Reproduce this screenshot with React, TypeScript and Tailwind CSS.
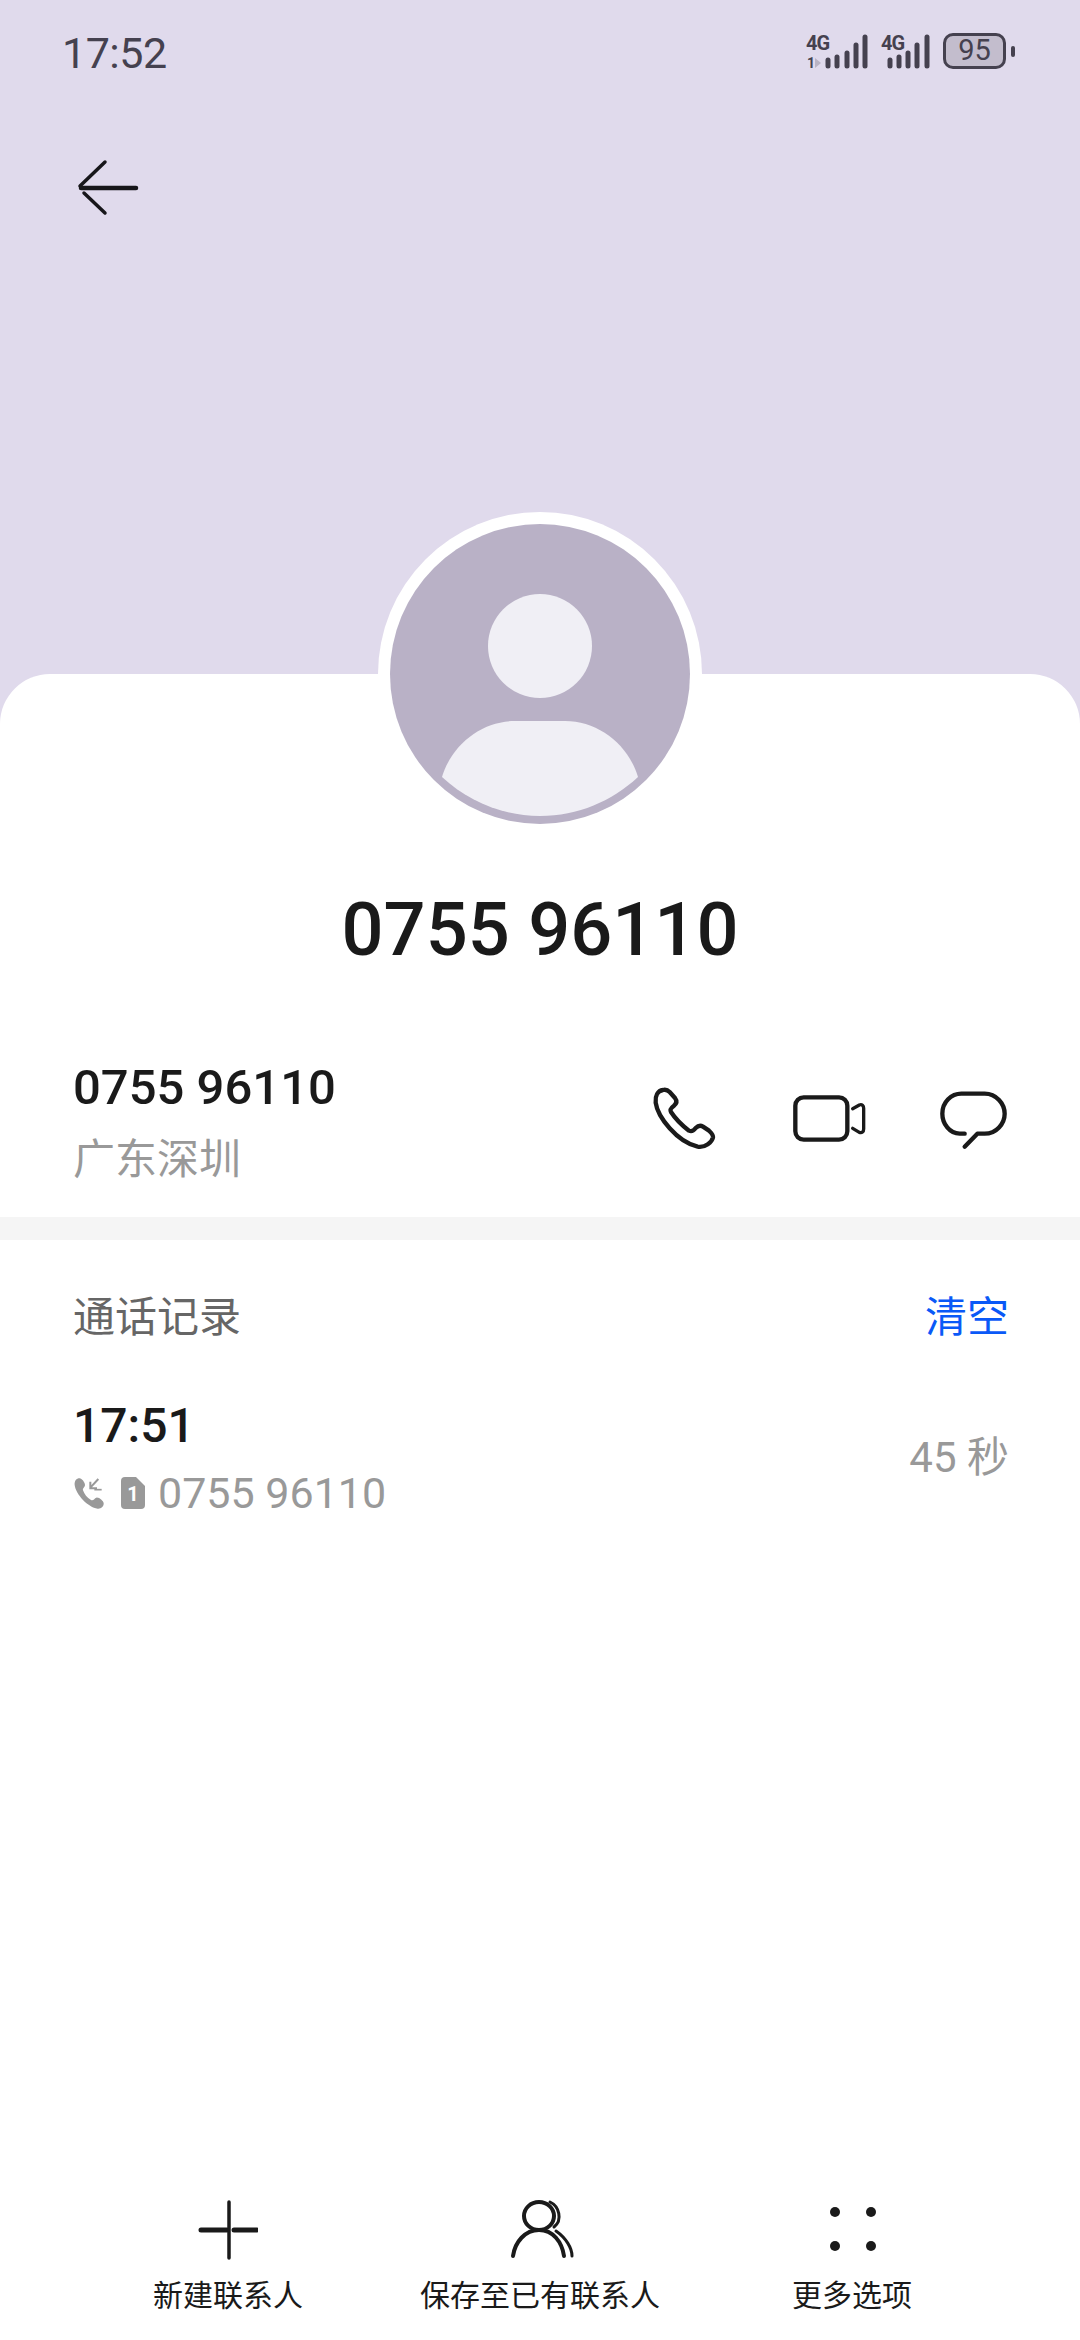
const sans = "font-['Roboto','Noto_Sans_CJK_SC',sans-serif]";

function SignalIcons() {
  const bars = [828, 837, 847, 856, 865, 890, 899, 908, 917, 927];
  const tops = [58, 55, 51, 43, 35, 58, 55, 51, 43, 35];
  return (
    <svg width="130" height="44" viewBox="805 29 130 44" fill="none" className="block">
      {bars.map((x, i) => (
        <line key={x} x1={x} x2={x} y1={tops[i] + 2} y2="66" stroke="#45414f" strokeWidth="5" strokeLinecap="round" />
      ))}
      <text x="806" y="50" fontSize="20" fontWeight="700" fill="#45414f" fontFamily="Roboto, sans-serif" letterSpacing="-1">
        4G
      </text>
      <text x="881" y="50" fontSize="20" fontWeight="700" fill="#45414f" fontFamily="Roboto, sans-serif" letterSpacing="-1">
        4G
      </text>
      <text x="807" y="68" fontSize="14" fontWeight="700" fill="#45414f" fontFamily="Roboto, sans-serif">
        1
      </text>
      <path d="M815 58 L821 63 L815 68 Z" fill="#b9b3c4" />
    </svg>
  );
}

function StatusBar() {
  return (
    <div className="flex h-[105px] items-start justify-between pl-[62px] pr-[65px] pt-[26px]">
      <span className="text-[43px] leading-[54px] tracking-[-0.5px] text-[#45414f]">17:52</span>
      <div className="flex items-start gap-[8px] pt-[3px]">
        <SignalIcons />
        <div className="mt-[4px] flex items-center gap-[5px]">
          <div className="flex h-[36px] w-[63px] items-center justify-center rounded-[10px] border-[3px] border-[#45414f] bg-[#c3bdcd] text-[29px] text-[#45414f]">
            95
          </div>
          <div className="h-[11px] w-[4px] rounded-full bg-[#45414f]" />
        </div>
      </div>
    </div>
  );
}

function BackArrow() {
  return (
    <svg width="66" height="60" viewBox="75 158 66 60" fill="none" stroke="#17161a" strokeLinecap="round" className="ml-[75px] mt-[53px] block">
      <path d="M105 162 L80 186" strokeWidth="3.5" />
      <path d="M84 193 L105 213" strokeWidth="3.5" />
      <path d="M81 188 H136" strokeWidth="4.5" />
    </svg>
  );
}

function Avatar() {
  return (
    <div className="-mt-[162px] rounded-full bg-white p-[12px]">
      <svg width="300" height="300" viewBox="390 525 300 300" className="block">
        <circle cx="540" cy="675" r="150" fill="#b9b1c6" />
        <circle cx="540" cy="647" r="52" fill="#f0eff5" />
        <path d="M442 778 C452 745 482 722 515 722 H565 C598 722 628 745 638 778 C612 802 578 817 540 817 C502 817 468 802 442 778 Z" fill="#f0eff5" />
      </svg>
    </div>
  );
}

function PhoneIcon() {
  return (
    <svg width="66" height="66" viewBox="92 82 198 198" fill="none" stroke="#1a1a1a" strokeWidth="13" strokeLinejoin="round">
      <path d="M128 94 C112 96 104 112 106 132 C112 175 170 250 232 264 C255 268 275 250 278 236 C279 228 272 222 266 216 L248 204 C238 198 232 202 226 208 C220 216 214 220 206 216 C185 200 165 180 152 160 C148 152 152 148 160 142 C170 134 170 126 164 118 L148 100 C142 94 136 92 128 94 Z" />
    </svg>
  );
}

function VideoIcon() {
  return (
    <svg width="76" height="66" viewBox="512 82 228 198" fill="none" stroke="#1a1a1a" strokeWidth="13" strokeLinecap="round" strokeLinejoin="round">
      <rect x="522" y="116" width="156" height="127" rx="25" />
      <path d="M694 150 L714 139 C722 136 727 141 727 149 V211 C727 219 722 224 714 221 L694 209" strokeWidth="10" />
    </svg>
  );
}

function MessageIcon() {
  return (
    <svg width="70" height="66" viewBox="950 82 210 198" fill="none" stroke="#1a1a1a" strokeWidth="13" strokeLinecap="round" strokeLinejoin="round">
      <path d="M1030 225 H1015 C985 225 963 195 963 165 C963 130 990 105 1020 105 H1090 C1125 105 1150 135 1150 165 C1150 195 1125 225 1090 225 H1068 L1030 264" />
    </svg>
  );
}

function IncomingIcon() {
  return (
    <svg width="32" height="34" viewBox="72 255 96 102" className="block">
      <path d="M92 262 C82 262 76 270 77 282 C80 310 118 350 146 353 C156 354 165 346 164 336 C163 330 150 318 142 320 C136 321 134 330 126 327 C114 320 106 310 102 298 C100 292 108 288 108 282 C108 274 98 262 92 262 Z" fill="#999" />
      <path d="M148 264 L124 290 M124 272 V292 H144" fill="none" stroke="#999" strokeWidth="6" />
      <path d="M136 296 H158" fill="none" stroke="#999" strokeWidth="5" />
    </svg>
  );
}

function SimIcon() {
  return (
    <svg width="24" height="32" viewBox="0 0 24 32" className="block">
      <path d="M4 0 H15 L24 9 V28 Q24 32 20 32 H4 Q0 32 0 28 V4 Q0 0 4 0 Z" fill="#999" />
      <text x="12" y="24" textAnchor="middle" fontSize="20" fontWeight="700" fill="#fff" fontFamily="Roboto, sans-serif">
        1
      </text>
    </svg>
  );
}

function PlusIcon() {
  return (
    <svg width="60" height="60" viewBox="197 2202 60 60" fill="none" stroke="#1a1a1a" strokeLinecap="round">
      <path d="M200 2232 H226 M233 2232 H256" strokeWidth="5" />
      <path d="M228 2204 V2260" strokeWidth="3.5" />
    </svg>
  );
}

function PersonIcon() {
  return (
    <svg width="70" height="60" viewBox="504 2202 70 60" fill="none" stroke="#1a1a1a" strokeLinecap="round">
      <ellipse cx="538" cy="2218" rx="15" ry="14" strokeWidth="4" />
      <path d="M512 2258 C514 2244 524 2232 538 2232 C552 2232 561 2244 563 2258" strokeWidth="4" />
      <path d="M549 2204 C558 2208 562 2222 553 2229" strokeWidth="3" />
      <path d="M555 2233 C565 2240 571 2250 571 2258" strokeWidth="3" />
    </svg>
  );
}

function DotsIcon() {
  return (
    <svg width="60" height="60" viewBox="821 2202 60 60" fill="#1a1a1a">
      <circle cx="834" cy="2214" r="5" />
      <circle cx="870" cy="2214" r="5" />
      <circle cx="834" cy="2248" r="5" />
      <circle cx="870" cy="2248" r="5" />
    </svg>
  );
}

function BottomAction({ icon, label }: { icon: React.ReactNode; label: string }) {
  return (
    <div className="flex flex-1 flex-col items-center gap-[16px]">
      {icon}
      <span className="text-[30px] leading-[40px] text-[#1a1a1a]">{label}</span>
    </div>
  );
}

export default function App() {
  return (
    <div className={`flex h-[2340px] w-[1080px] flex-col overflow-hidden bg-[#e0daec] ${sans}`}>
      <div className="h-[674px] shrink-0">
        <StatusBar />
        <BackArrow />
      </div>

      <div className="flex flex-1 flex-col rounded-t-[50px] bg-white">
        <div className="flex flex-col items-center">
          <Avatar />
          <h1 className="mt-[49px] text-[74px] font-medium leading-[90px] text-[#1a1a1a]">0755 96110</h1>
        </div>

        <div className="mt-[83px] flex h-[159px] items-start justify-between pl-[73px] pr-[72px]">
          <div className="flex flex-col">
            <span className="text-[49px] font-medium leading-[60px] text-[#1a1a1a]">0755 96110</span>
            <span className="mt-[14px] text-[42px] leading-[56px] text-[#999]">广东深圳</span>
          </div>
          <div className="flex items-center gap-[70px] pt-[28px]">
            <div className="mr-[5px]">
              <PhoneIcon />
            </div>
            <VideoIcon />
            <MessageIcon />
          </div>
        </div>

        <div className="h-[23px] bg-[#f5f5f5]" />

        <div className="flex items-center justify-between pl-[73px] pr-[71px] pt-[50px]">
          <span className="text-[42px] leading-[56px] text-[#666]">通话记录</span>
          <span className="text-[42px] leading-[56px] text-[#0a59f7]">清空</span>
        </div>

        <div className="mt-[50px] flex items-center justify-between pl-[73px] pr-[71px]">
          <div className="flex flex-col">
            <span className="text-[48px] font-medium leading-[60px] text-[#1a1a1a]">17:51</span>
            <div className="mt-[10px] flex items-center">
              <IncomingIcon />
              <div className="ml-[16px] mr-[13px]">
                <SimIcon />
              </div>
              <span className="text-[43px] leading-[54px] text-[#999]">0755 96110</span>
            </div>
          </div>
          <span className="text-[42px] leading-[54px] text-[#999]">45 秒</span>
        </div>

        <div className="mt-auto flex px-[72px] pb-[24px]">
          <BottomAction icon={<PlusIcon />} label="新建联系人" />
          <BottomAction icon={<PersonIcon />} label="保存至已有联系人" />
          <BottomAction icon={<DotsIcon />} label="更多选项" />
        </div>
      </div>
    </div>
  );
}
